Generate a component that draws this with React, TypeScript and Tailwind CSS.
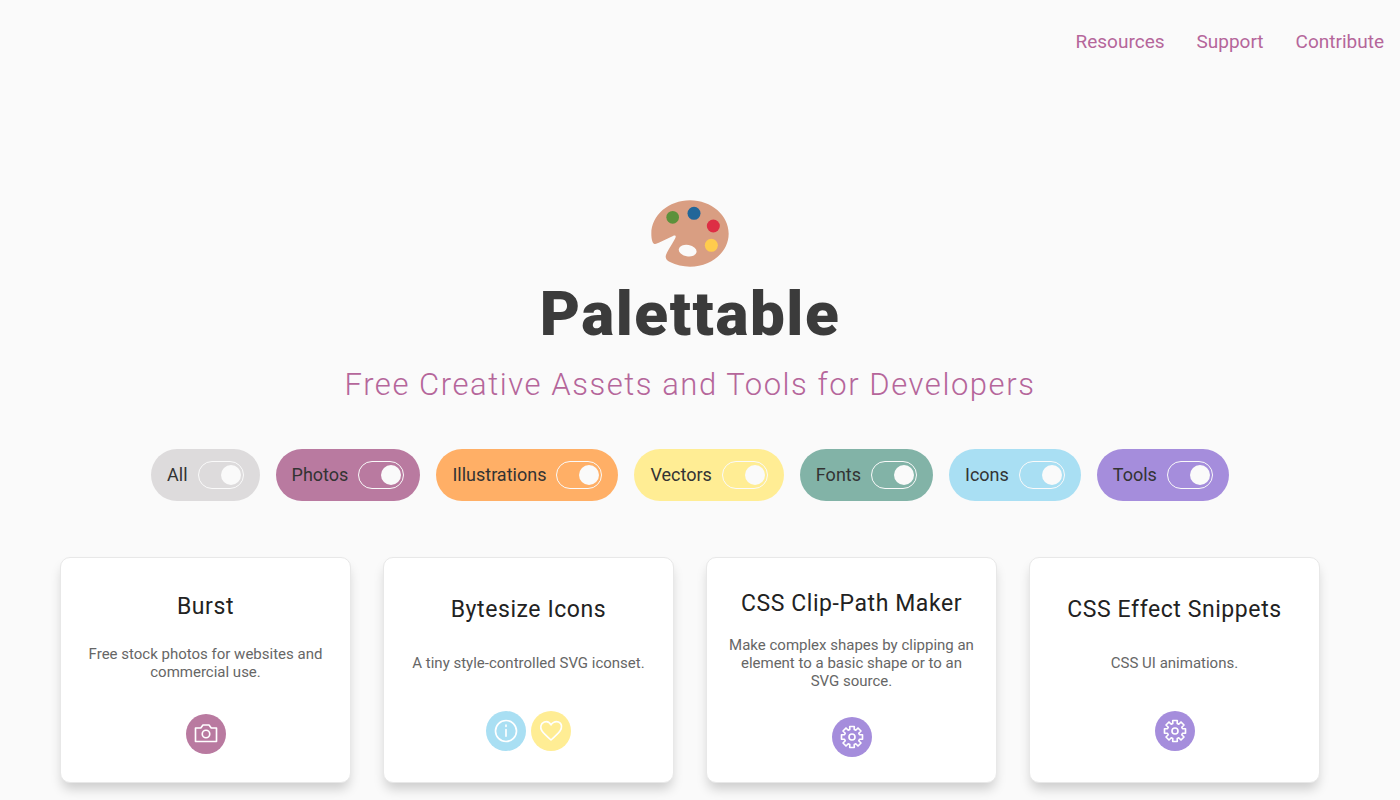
import type { ReactNode } from "react";

type Category = "all" | "photos" | "illustrations" | "vectors" | "fonts" | "icons" | "tools";

const filters: { id: Category; label: string; color: string }[] = [
  { id: "all", label: "All", color: "bg-[#dddbdc]" },
  { id: "photos", label: "Photos", color: "bg-[#b97aa0]" },
  { id: "illustrations", label: "Illustrations", color: "bg-[#ffaf66]" },
  { id: "vectors", label: "Vectors", color: "bg-[#ffed94]" },
  { id: "fonts", label: "Fonts", color: "bg-[#82b3a7]" },
  { id: "icons", label: "Icons", color: "bg-[#a9dff3]" },
  { id: "tools", label: "Tools", color: "bg-[#a58ddc]" },
];

const badges: Record<string, { color: string; shape: ReactNode }> = {
  photos: {
    color: "bg-[#b97aa0]",
    shape: (
      <>
        <path d="M2 8 L 9 8 12 4 20 4 23 8 30 8 30 26 2 26 Z" />
        <circle cx="16" cy="16" r="5" />
      </>
    ),
  },
  icons: {
    color: "bg-[#a9dff3]",
    shape: (
      <>
        <path d="M16 14 L16 23 M16 8 L16 10" />
        <circle cx="16" cy="16" r="14" />
      </>
    ),
  },
  vectors: {
    color: "bg-[#ffed94]",
    shape: (
      <path d="M4 16 C1 12 2 6 7 4 12 2 15 6 16 8 17 6 21 2 26 4 31 6 31 12 28 16 25 20 16 28 16 28 16 28 7 20 4 16 Z" />
    ),
  },
  tools: {
    color: "bg-[#a58ddc]",
    shape: (
      <>
        <path d="M13 2 L13 6 11 7 8 4 4 8 7 11 6 13 2 13 2 19 6 19 7 21 4 24 8 28 11 25 13 26 13 30 19 30 19 26 21 25 24 28 28 24 25 21 26 19 30 19 30 13 26 13 25 11 28 8 24 4 21 7 19 6 19 2 Z" />
        <circle cx="16" cy="16" r="4" />
      </>
    ),
  },
};

const resources = [
  { name: "Burst", text: "Free stock photos for websites and commercial use.", tags: ["photos"] },
  { name: "Bytesize Icons", text: "A tiny style-controlled SVG iconset.", tags: ["icons", "vectors"] },
  {
    name: "CSS Clip-Path Maker",
    text: "Make complex shapes by clipping an element to a basic shape or to an SVG source.",
    tags: ["tools"],
  },
  { name: "CSS Effect Snippets", text: "CSS UI animations.", tags: ["tools"] },
];

function PaletteLogo() {
  return (
    <svg viewBox="64 28 234 201" className="h-[67px] w-[78px]" aria-hidden="true">
      <path
        fill="#d99e82"
        d="M181 29 C117 29 65 74 65 129 C65 144 68 156 73 159 C77 161 84 158 92 154 L130 136 C137 133 140 136 137 142 C131 155 115 178 109 193 C106 202 110 210 121 214 C139 223 160 228 181 228 C245 228 297 184 297 129 C297 74 245 29 181 29 Z"
      />
      <ellipse cx="174" cy="180" rx="27" ry="17" transform="rotate(10 174 180)" fill="#fafafa" />
      <circle cx="129" cy="80" r="19" fill="#5c913b" />
      <circle cx="193" cy="68" r="19.5" fill="#226699" />
      <circle cx="251" cy="106" r="19.5" fill="#dd2e44" />
      <circle cx="245" cy="164" r="19.5" fill="#ffcc4d" />
    </svg>
  );
}

function FilterToggle({ id, label, color }: { id: Category; label: string; color: string }) {
  return (
    <label
      htmlFor={id}
      className={`${color} flex h-[52px] items-center gap-[10px] rounded-full px-4 text-lg text-[#333]`}
    >
      {label}
      <input
        id={id}
        type="checkbox"
        defaultChecked
        className="flex h-7 w-[46px] appearance-none items-center rounded-full border border-[#fafafa] px-0.5 before:size-5 before:rounded-full before:bg-[#fafafa] checked:justify-end"
      />
    </label>
  );
}

function ResourceCard({ name, text, tags }: { name: string; text: string; tags: string[] }) {
  return (
    <article className="flex min-h-[226px] flex-col items-center justify-around rounded-[10px] border border-[#e8e8e8] bg-white px-3 pt-[29px] pb-[22px] text-center shadow-[0_8px_12px_-2px_rgba(0,0,0,0.18)]">
      <h2 className="mb-3 text-[23px] leading-7 tracking-wide text-[#222]">{name}</h2>
      <p className="px-2 text-[15px] leading-[18px] text-[#666]">{text}</p>
      <div className="mt-5 flex gap-[5px]">
        {tags.map((tag) => (
          <span key={tag} className={`${badges[tag].color} flex size-10 items-center justify-center rounded-full`}>
            <svg
              viewBox="0 0 32 32"
              className="size-6"
              fill="none"
              stroke="#fff"
              strokeWidth="2.2"
              strokeLinecap="round"
              strokeLinejoin="round"
              aria-hidden="true"
            >
              {badges[tag].shape}
            </svg>
          </span>
        ))}
      </div>
    </article>
  );
}

export default function App() {
  return (
    <div className="min-h-screen bg-[#fafafa] pb-[18px] font-[Roboto,sans-serif]">
      <nav className="flex justify-end gap-8 px-4 pt-7 text-[19px] leading-7 text-[#b5669a]">
        <a href="#resources">Resources</a>
        <a href="#support">Support</a>
        <a href="#contribute">Contribute</a>
      </nav>
      <main className="pr-20 pl-[60px]">
        <header className="flex flex-col items-center pt-36">
          <PaletteLogo />
          <h1 className="mt-[7px] text-[62px] leading-20 font-black tracking-wide text-[#3b3b3b]">Palettable</h1>
          <p className="mt-[11px] text-[31px] leading-10 font-light tracking-wider text-[#b5669a]">
            Free Creative Assets and Tools for Developers
          </p>
        </header>
        <form className="mt-11 flex flex-wrap justify-center gap-4">
          {filters.map((filter) => (
            <FilterToggle key={filter.id} {...filter} />
          ))}
        </form>
        <section className="mt-14 grid grid-cols-4 gap-8">
          {resources.map((resource) => (
            <ResourceCard key={resource.name} {...resource} />
          ))}
        </section>
      </main>
    </div>
  );
}
